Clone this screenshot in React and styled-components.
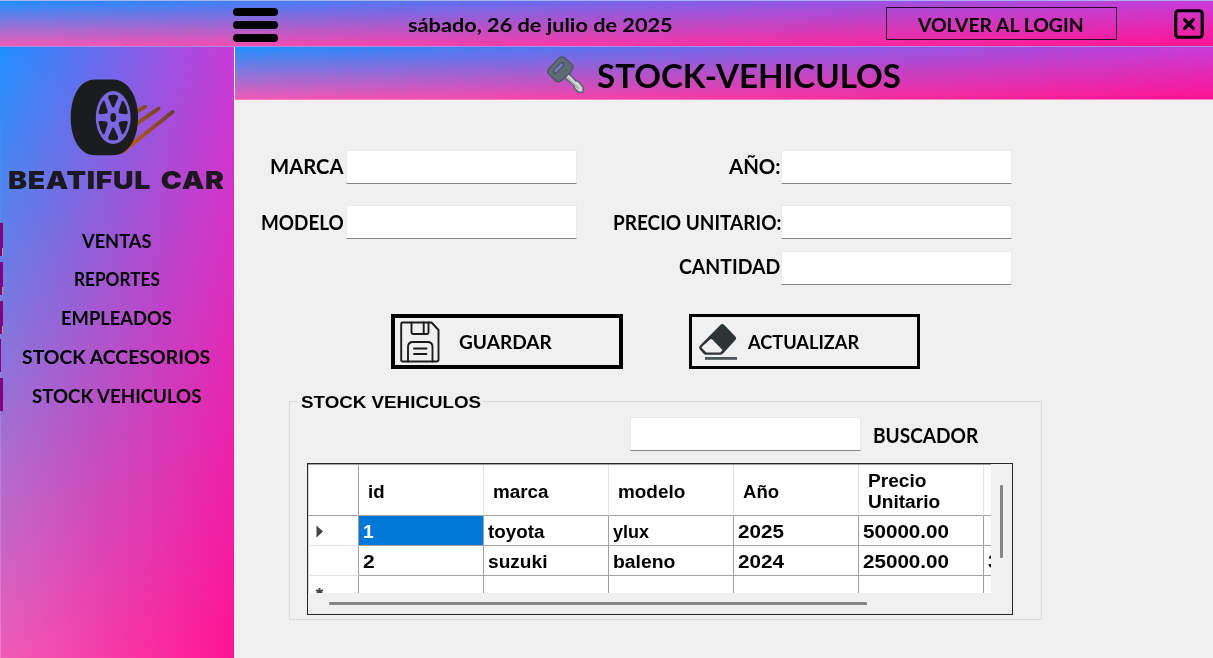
import React, { useLayoutEffect, useRef, useState } from "react";
import styled, { createGlobalStyle, css } from "styled-components";

const Global = createGlobalStyle`
  * { box-sizing: border-box; }
  html, body { margin: 0; padding: 0; background: #f0f0f0; }
  body { overflow: hidden; }
`;

const display = css`
  font-family: "Lato", "Open Sans", sans-serif;
  font-weight: 700;
`;

/* Four-corner gradient: a top edge blend fading into a bottom edge blend. */
const cornerGradient = css`
  position: relative;
  isolation: isolate;
  background: linear-gradient(to right, #f05cb8, #ff1493);
  &::before {
    content: "";
    position: absolute;
    inset: 0;
    z-index: -1;
    background: linear-gradient(to right, #1e90ff, #c83cd8);
    mask-image: linear-gradient(to bottom, #000, transparent);
  }
`;

const Window = styled.div`
  width: 1213px;
  height: 658px;
  display: flex;
  flex-direction: column;
  background: #f0f0f0;
  color: #000;
  overflow: hidden;
`;

const TopBar = styled.header`
  ${cornerGradient}
  flex: none;
  height: 47px;
  display: flex;
  align-items: center;
  padding: 2px 9px 0 233px;
  border-top: 1px solid #a9b4ee;
  border-bottom: 1px solid #a58fe6;
`;

const MenuButton = styled.div`
  width: 45px;
  height: 34px;
  display: flex;
  flex-direction: column;
  justify-content: space-between;
`;

const MenuBar = styled.span`
  height: 8px;
  border-radius: 4px;
  background: #000;
`;

const DateText = styled.div`
  margin-left: 130px;
  font-size: 19.5px;
`;

const LoginButton = styled.div`
  margin-left: 213px;
  width: 232px;
  height: 33px;
  margin-top: -3px;
  padding-top: 3px;
  display: flex;
  align-items: center;
  justify-content: center;
  border: 1px solid #2a0a2c;
  font-size: 19px;
`;

const CloseIcon = styled.svg`
  display: block;
  width: 30px;
  height: 30px;
  margin-left: 57px;
  margin-top: -2px;
`;

const Body = styled.div`
  flex: 1;
  display: flex;
  min-height: 0;
`;

const Sidebar = styled.aside`
  ${cornerGradient}
  flex: none;
  width: 234px;
  padding-top: 31px;
  box-shadow: inset 1px 0 rgba(255, 255, 255, 0.2);
`;

const LogoMark = styled.svg`
  display: block;
  width: 106px;
  height: 78px;
  margin-left: 69px;
`;

const LogoName = styled.div`
  height: 30px;
  margin: 9px 0 0 8px;
  color: #1c1820;
  font-family: "Inter", "Liberation Sans", sans-serif;
  font-weight: 900;
  font-size: 24.5px;
  line-height: 30px;
  letter-spacing: 0.6px;
  word-spacing: 3px;
`;

const Nav = styled.nav`
  margin: 28px 0 0;
  display: flex;
  flex-direction: column;
  gap: 5.8px;
`;

const NavItem = styled.div`
  position: relative;
  height: 33px;
  display: flex;
  align-items: center;
  justify-content: center;
  padding-top: 1px;
  font-size: 19px;
  border-left: ${(p) => (p.$thin ? 1.5 : 3)}px solid #800080;
  padding-right: ${(p) => (p.$thin ? 4 : 4)}px;
  &::after {
    content: "";
    display: ${(p) => (p.$mark ? "block" : "none")};
    position: absolute;
    left: -1px;
    bottom: 0;
    width: 1px;
    height: 8px;
    background: #b9a06e;
  }
`;

const Main = styled.main`
  flex: 1;
  min-width: 0;
`;

const TitleBar = styled.div`
  ${cornerGradient}
  height: 53px;
  margin-left: 1px;
  padding: 5px 0 0 311px;
  display: flex;
  align-items: center;
  border-bottom: 1px solid #f77cbe;
`;

const KeyIcon = styled.svg`
  display: block;
  width: 39px;
  height: 39px;
`;

const Title = styled.h1`
  margin: 1px 0 0 12px;
  font: inherit;
  font-size: 32px;
  line-height: 40px;
`;

const Form = styled.div`
  display: grid;
  grid-template-columns: 112px 231px 204px 231px;
  grid-template-rows: 55px 46px 33px;
  padding-top: 50px;
`;

const Label = styled.div`
  grid-column: ${(p) => p.$col};
  grid-row: ${(p) => p.$row};
  display: flex;
  height: 33px;
  align-items: center;
  justify-content: flex-end;
  padding: ${(p) => p.$pad || "0 1px 0 0"};
  font-size: 20px;
`;

const Field = styled.div`
  grid-column: ${(p) => p.$col};
  grid-row: ${(p) => p.$row};
  width: 231px;
  height: 34px;
  background: #fff;
  border: 1px solid #e9e9e9;
  border-bottom: 1px solid #868686;
  border-radius: 1px;
`;

const Actions = styled.div`
  display: flex;
  gap: 66px;
  margin: 30px 0 0 157px;
`;

const ActionButton = styled.div`
  width: 231.5px;
  height: 55px;
  display: flex;
  align-items: center;
  border: ${(p) => p.$border}px solid #000;
  padding-left: ${(p) => 9 - p.$border}px;
  font-size: 19.5px;
  svg { display: block; flex: none; width: 40px; height: 42px; }
  span { margin-left: ${(p) => p.$gap}px; }
`;

const Group = styled.fieldset`
  width: 753px;
  height: 229px;
  min-width: 0;
  margin: 22px 0 0 55px;
  padding: 0 0 0 17px;
  border: 1px solid #dcdcdc;
`;

const Legend = styled.legend`
  margin-left: -9px;
  padding: 2px 1px 0 3px;
  height: 20px;
  font-family: "Liberation Sans", Arial, sans-serif;
  font-weight: 700;
  font-size: 17px;
  line-height: 20px;
`;

const SearchRow = styled.div`
  display: flex;
  align-items: center;
  margin: 6px 0 0 323px;
  gap: 12px;
  height: 34px;
  font-size: 20px;
  > span { margin-top: 1px; }
`;

const TableFrame = styled.div`
  width: 706px;
  height: 152px;
  margin-top: 12px;
  border: 1.5px solid #262626;
  display: grid;
  grid-template-columns: 683px 1fr;
  grid-template-rows: 129px 1fr;
`;

const TableClip = styled.div`
  overflow: hidden;
  background: #fff;
  border-top: 1px solid #a0a0a0;
  font-family: "Liberation Sans", Arial, sans-serif;
  font-weight: 700;
  font-size: 17.5px;
  line-height: 21px;
`;

const Row = styled.div`
  display: grid;
  grid-template-columns: 51px repeat(6, 125px);
  width: 801px;
  height: ${(p) => p.$h}px;
`;

const Cell = styled.div`
  display: flex;
  flex-direction: column;
  justify-content: center;
  align-items: flex-start;
  padding: ${(p) => (p.$head ? "4px 0 0 9px" : "3px 0 0 4px")};
  border-right: 1px solid ${(p) => (p.$head ? "#e2e2e2" : "#a0a0a0")};
  border-bottom: 1px solid #a0a0a0;
  background: ${(p) => (p.$selected ? "#0078d7" : "#fff")};
  color: ${(p) => (p.$selected ? "#fff" : "#000")};
`;

const RowHeader = styled.div`
  display: flex;
  align-items: center;
  padding: 2px 0 0 6px;
  border-right: 1px solid #a0a0a0;
  border-bottom: 1px solid ${(p) => (p.$top ? "#a0a0a0" : "#e2e2e2")};
  border-left: 1px solid #d8d8d8;
`;

const Glyph = styled.svg`
  display: block;
  width: 9px;
  height: 13px;
`;

const VTrack = styled.div`
  padding: 21px 0 0 9px;
`;

const HTrack = styled.div`
  padding: 9px 0 0 21px;
`;

const Thumb = styled.div`
  width: ${(p) => p.$w}px;
  height: ${(p) => p.$h}px;
  border-radius: 1px;
  background: #868686;
`;

const FitBox = styled.span`
  display: inline-block;
  flex: none;
  width: ${(p) => p.$w}px;
  white-space: nowrap;
`;

const FitInner = styled.span`
  && { margin: 0; }
  display: inline-block;
  transform-origin: 0 50%;
`;

/* Stretches a run of text horizontally to a set width. */
function Fit({ w, children }) {
  const ref = useRef(null);
  const [scale, setScale] = useState(1);
  useLayoutEffect(() => {
    setScale(w / ref.current.offsetWidth);
  }, [w, children]);
  return (
    <FitBox $w={w}>
      <FitInner ref={ref} style={{ transform: `scaleX(${scale})` }}>{children}</FitInner>
    </FitBox>
  );
}

const Shell = styled(Window)`
  ${display}
`;

const navItems = [
  { text: "VENTAS", w: 69, mark: true },
  { text: "REPORTES", w: 86, mark: true },
  { text: "EMPLEADOS", w: 111, mark: true },
  { text: "STOCK ACCESORIOS", w: 188, thin: true },
  { text: "STOCK VEHICULOS", w: 169 },
];

const columns = [
  [["id", 17]],
  [["marca", 56]],
  [["modelo", 67]],
  [["Año", 36]],
  [["Precio", 59], ["Unitario", 72]],
  [],
];

const rows = [
  [["1", 11], ["toyota", 57], ["ylux", 36], ["2025", 46], ["50000.00", 86], null],
  [["2", 12], ["suzuki", 59], ["baleno", 62], ["2024", 46], ["25000.00", 86], ["3", 11]],
];

const spokes = [0, 60, 120, 180, 240, 300];

function Logo() {
  return (
    <LogoMark viewBox="69 78 106 78">
      <defs>
        <linearGradient id="speed" gradientUnits="userSpaceOnUse" x1="130" y1="145" x2="174" y2="110">
          <stop offset="0" stopColor="#bd5a18" />
          <stop offset="1" stopColor="#674030" />
        </linearGradient>
      </defs>
      <g stroke="url(#speed)" strokeWidth="4" strokeLinecap="round" fill="none">
        <path d="M134 113 L145 106.8" />
        <path d="M134 125.5 L158.5 108.6" />
        <path d="M123 151.5 L172.5 112" />
      </g>
      <path
        d="M95 79.5 H113 C128 79.5 138 96 138 117.5 C138 139 128 155.3 113 155.3 H95 C80 155.3 70.7 139 70.7 117.5 C70.7 96 80 79.5 95 79.5Z"
        fill="#1b1c1e"
      />
      <ellipse cx="113.2" cy="117.5" rx="17.4" ry="26.5" fill="#7d66e4" />
      <g transform="translate(113.2 117.5) scale(1 1.52)" fill="#1b1c1e">
        {spokes.map((a) => (
          <path key={a} transform={`rotate(${a})`} d="M-4.3 -14.4 Q0 -15.6 4.3 -14.4 Q5.2 -13.8 4.8 -12.6 L1.2 -7.2 Q0 -5.9 -1.2 -7.2 L-4.8 -12.6 Q-5.2 -13.8 -4.3 -14.4Z" />
        ))}
        <circle r="2.9" />
      </g>
    </LogoMark>
  );
}

function SaveIcon() {
  return (
    <svg viewBox="0 0 40 42" fill="none" stroke="#1c1c1c" strokeWidth="1.9" strokeLinejoin="round" strokeLinecap="round">
      <path d="M2.5 1.5 H31.5 L38.5 9 V38.5 Q38.5 40.5 36.5 40.5 H2.5 Q1.2 40.5 1.2 39 V3 Q1.2 1.5 2.5 1.5Z" />
      <path d="M11.5 1.5 V11.5 Q11.5 13 13 13 H27 Q28.5 13 28.5 11.5 V1.5 M23.7 1.5 V12.5" />
      <path d="M8 40.5 V26 Q8 21 13 21 H27.5 Q32.5 21 32.5 26 V40.5" />
      <path d="M14 27.5 H26.5 M14 33 H26.5" />
    </svg>
  );
}

function EraserIcon() {
  return (
    <svg viewBox="0 0 40 42">
      <path d="M1.8 24.8 L22.8 3.6 Q24.3 2.3 25.8 3.6 L37.6 15.8 Q38.8 17.3 37.6 18.8 L24.8 32.8 Q23.8 33.8 22 33.8 H8 Q6.5 33.8 5.6 32.7 L1.9 28.5 Q0.2 26.5 1.8 24.8Z" fill="#2e3436" />
      <path d="M14.3 18.5 L24.5 29 L22.8 31 Q22.2 31.6 21.2 31.6 H9.2 Q8.4 31.6 7.8 31 L4 27.2 Q3.4 26.5 4 25.8 L12 18.4 Q13.2 17.4 14.3 18.5Z" fill="#f0f0f0" />
      <rect x="7" y="36" width="32" height="2.8" fill="#4d5658" />
    </svg>
  );
}

export default function App() {
  return (
    <Shell>
      <Global />
      <TopBar>
        <MenuButton><MenuBar /><MenuBar /><MenuBar /></MenuButton>
        <DateText><Fit w={265}>sábado, 26 de julio de 2025</Fit></DateText>
        <LoginButton><Fit w={166}>VOLVER AL LOGIN</Fit></LoginButton>
        <CloseIcon viewBox="0 0 30 30" fill="none" stroke="#000" strokeLinecap="round">
          <rect x="1.7" y="1.7" width="26.6" height="26.6" rx="3" strokeWidth="3.2" />
          <path d="M10.7 10.7 L19.3 19.3 M19.3 10.7 L10.7 19.3" strokeWidth="3.2" />
        </CloseIcon>
      </TopBar>
      <Body>
        <Sidebar>
          <Logo />
          <LogoName><Fit w={217}>BEATIFUL CAR</Fit></LogoName>
          <Nav>
            {navItems.map((n) => (
              <NavItem key={n.text} $thin={n.thin} $mark={n.mark}><Fit w={n.w}>{n.text}</Fit></NavItem>
            ))}
          </Nav>
        </Sidebar>
        <Main>
          <TitleBar>
            <KeyIcon viewBox="0 0 40 40">
              <path d="M18 21 L22.5 17 L30.5 25.5 L33 26 L38 31.8 V37 L33.5 37.3 L29.5 33.5 L29 30.8Z" fill="#d5d5d8" stroke="#56606b" strokeWidth="1.5" strokeLinejoin="round" />
              <path d="M20 20.5 L33.5 33.5" stroke="#a9abb1" strokeWidth="1.6" />
              <path d="M13.5 2 Q16.5 -0.3 19.5 2 L26.8 8.8 Q28.6 11 27 13.6 Q25.5 17.6 21.5 20 Q18.5 23.5 14.8 25.8 Q12.3 27.5 10 25.6 L2.6 18.3 Q0.6 15.8 2.6 13.2Z" fill="#5d6b75" stroke="#47545f" strokeWidth="1.2" />
              <path d="M9.6 15.6 L16.4 8.8" stroke="#47545f" strokeWidth="5" strokeLinecap="round" />
              <path d="M9.8 15.4 L16.2 9" stroke="#7878c0" strokeWidth="2.8" strokeLinecap="round" />
            </KeyIcon>
            <Title><Fit w={304}>STOCK-VEHICULOS</Fit></Title>
          </TitleBar>
          <Form>
            <Label $col={1} $row={1} $pad="0 2px 2px 0"><Fit w={74}>MARCA</Fit></Label>
            <Field $col={2} $row={1} />
            <Label $col={3} $row={1} $pad="0 0 2px 0"><Fit w={52}>AÑO:</Fit></Label>
            <Field $col={4} $row={1} />
            <Label $col={1} $row={2} $pad="0 2px 0 0"><Fit w={83}>MODELO</Fit></Label>
            <Field $col={2} $row={2} />
            <Label $col={3} $row={2} $pad="0"><Fit w={168}>PRECIO UNITARIO:</Fit></Label>
            <Field $col={4} $row={2} />
            <Label $col={3} $row={3} $pad="0 1px 4px 0"><Fit w={101}>CANTIDAD</Fit></Label>
            <Field $col={4} $row={3} />
          </Form>
          <Actions>
            <ActionButton $border={4} $gap={19}><SaveIcon /><Fit w={93}>GUARDAR</Fit></ActionButton>
            <ActionButton $border={3} $gap={10}><EraserIcon /><Fit w={111}>ACTUALIZAR</Fit></ActionButton>
          </Actions>
          <Group>
            <Legend><Fit w={180}>STOCK VEHICULOS</Fit></Legend>
            <SearchRow><Field /><Fit w={105}>BUSCADOR</Fit></SearchRow>
            <TableFrame>
              <TableClip>
                <Row $h={51}>
                  <RowHeader $top />
                  {columns.map((lines, i) => (
                    <Cell key={i} $head>{lines.map(([t, w]) => <Fit key={t} w={w}>{t}</Fit>)}</Cell>
                  ))}
                </Row>
                {rows.map((cells, r) => (
                  <Row key={r} $h={30}>
                    <RowHeader>
                      {r === 0 && <Glyph viewBox="0 0 9 13"><path d="M1.5 0.5 L8 6.5 L1.5 12.5Z" fill="#444" /></Glyph>}
                    </RowHeader>
                    {cells.map((c, i) => (
                      <Cell key={i} $selected={r === 0 && i === 0}>{c && <Fit w={c[1]}>{c[0]}</Fit>}</Cell>
                    ))}
                  </Row>
                ))}
                <Row $h={30}>
                  <RowHeader>
                    <Glyph viewBox="0 0 9 13"><path d="M4.5 3 V11 M1 5 L8 9 M8 5 L1 9" stroke="#444" strokeWidth="2" /></Glyph>
                  </RowHeader>
                  {columns.map((_, i) => <Cell key={i} />)}
                </Row>
              </TableClip>
              <VTrack><Thumb $w={3} $h={73} /></VTrack>
              <HTrack><Thumb $w={538} $h={3} /></HTrack>
            </TableFrame>
          </Group>
        </Main>
      </Body>
    </Shell>
  );
}
